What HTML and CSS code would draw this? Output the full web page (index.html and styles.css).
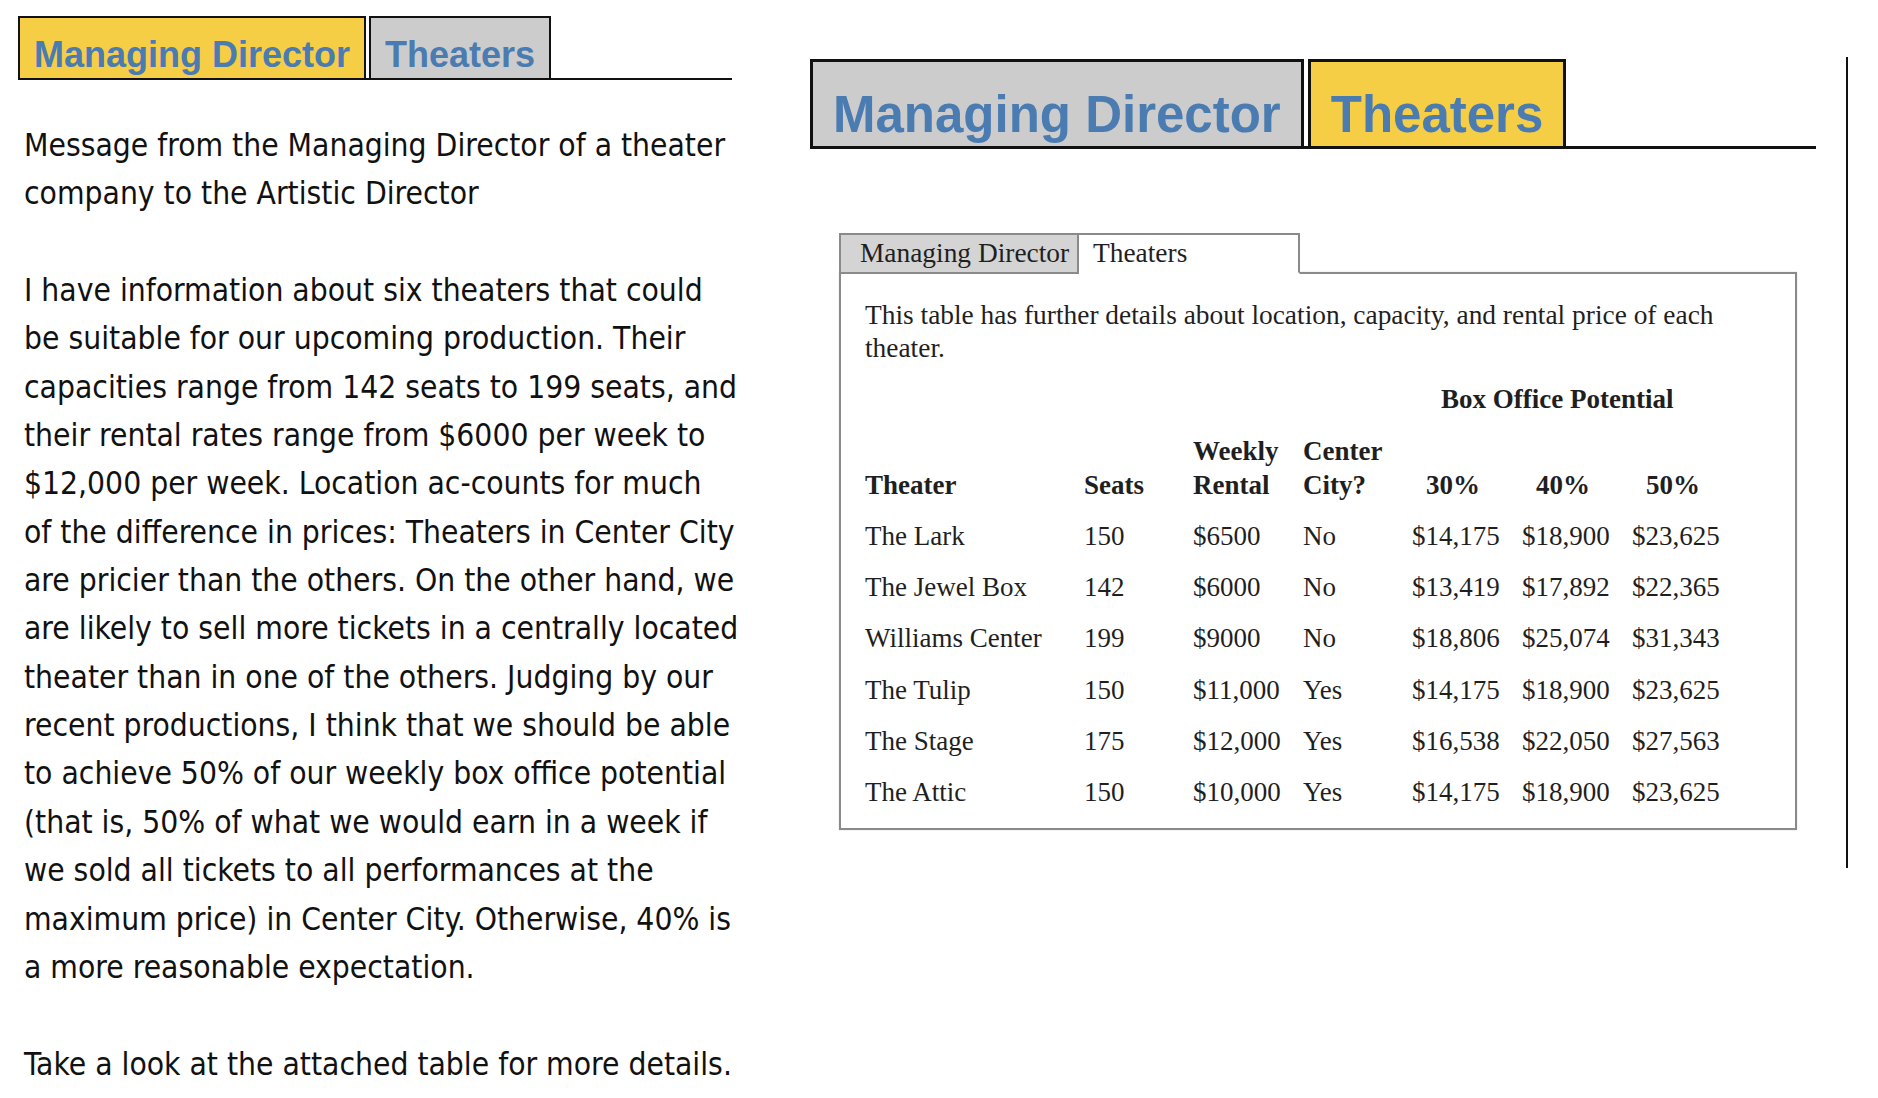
FILE: index.html
```html
<!DOCTYPE html>
<html lang="en">
<head>
<meta charset="utf-8">
<title>Managing Director – Theaters</title>
<link rel="stylesheet" href="styles.css">
</head>
<body>
<div class="page">
  <section class="memo">
    <nav class="tabs tabs-sm">
      <div class="tab tab-on">Managing Director</div>
      <div class="tab tab-off">Theaters</div>
    </nav>
    <div class="memo-body">
      <p>Message from the Managing Director of a theater<br>company to the Artistic Director</p>
      <p>I have information about six theaters that could<br>be suitable for our upcoming production. Their<br>capacities range from 142 seats to 199 seats, and<br>their rental rates range from $6000 per week to<br>$12,000 per week. Location ac-counts for much<br>of the difference in prices: Theaters in Center City<br>are pricier than the others. On the other hand, we<br>are likely to sell more tickets in a centrally located<br>theater than in one of the others. Judging by our<br>recent productions, I think that we should be able<br>to achieve 50% of our weekly box office potential<br>(that is, 50% of what we would earn in a week if<br>we sold all tickets to all performances at the<br>maximum price) in Center City. Otherwise, 40% is<br>a more reasonable expectation.</p>
      <p>Take a look at the attached table for more details.</p>
    </div>
  </section>

  <section class="doc">
    <nav class="tabs tabs-lg">
      <div class="tab tab-off">Managing Director</div>
      <div class="tab tab-on">Theaters</div>
    </nav>
    <div class="window">
      <div class="wtabs">
        <div class="wtab wtab-off">Managing Director</div>
        <div class="wtab wtab-on">Theaters</div>
      </div>
      <div class="wpanel">
        <p class="desc">This table has further details about location, capacity, and rental price of each theater.</p>
        <table class="theaters">
          <colgroup>
            <col class="c-name"><col class="c-num"><col class="c-num2"><col class="c-num">
            <col class="c-num2"><col class="c-num2"><col class="c-num2">
          </colgroup>
          <thead>
            <tr class="group">
              <th colspan="4"></th>
              <th colspan="3" class="bop">Box Office Potential</th>
            </tr>
            <tr class="head">
              <th>Theater</th>
              <th>Seats</th>
              <th>Weekly<br>Rental</th>
              <th>Center<br>City?</th>
              <th class="pct">30%</th>
              <th class="pct">40%</th>
              <th class="pct">50%</th>
            </tr>
          </thead>
          <tbody>
            <tr><td>The Lark</td><td>150</td><td>$6500</td><td>No</td><td>$14,175</td><td>$18,900</td><td>$23,625</td></tr>
            <tr><td>The Jewel Box</td><td>142</td><td>$6000</td><td>No</td><td>$13,419</td><td>$17,892</td><td>$22,365</td></tr>
            <tr><td>Williams Center</td><td>199</td><td>$9000</td><td>No</td><td>$18,806</td><td>$25,074</td><td>$31,343</td></tr>
            <tr><td>The Tulip</td><td>150</td><td>$11,000</td><td>Yes</td><td>$14,175</td><td>$18,900</td><td>$23,625</td></tr>
            <tr><td>The Stage</td><td>175</td><td>$12,000</td><td>Yes</td><td>$16,538</td><td>$22,050</td><td>$27,563</td></tr>
            <tr><td>The Attic</td><td>150</td><td>$10,000</td><td>Yes</td><td>$14,175</td><td>$18,900</td><td>$23,625</td></tr>
          </tbody>
        </table>
      </div>
    </div>
  </section>
</div>
</body>
</html>
```

FILE: styles.css
```css
html, body {
  margin: 0;
  padding: 0;
  background: #ffffff;
  overflow: hidden;
}

.page {
  display: flex;
  align-items: flex-start;
  gap: 78px;
  padding: 16px 0 0 18px;
}

/* ---------- tab bars ---------- */
.tabs {
  display: flex;
  align-items: flex-end;
  font-family: "Liberation Sans", Arial, sans-serif;
  font-weight: bold;
  color: #4a7bb1;
  white-space: nowrap;
}

.tab-on { background: #f6ce45; }
.tab-off { background: #cccccc; }

.tabs-sm {
  gap: 3px;
  border-bottom: 2px solid #111111;
}

.tabs-sm .tab {
  border: 2px solid #111111;
  border-bottom: 0;
  font-size: 36px;
  line-height: 40px;
  padding: 17px 14px 3px;
}

.tabs-lg {
  width: 1006px;
  gap: 4px;
  border-bottom: 3px solid #111111;
}

.tabs-lg .tab {
  border: 3px solid #111111;
  border-bottom: 0;
  font-size: 51px;
  line-height: 56px;
  padding: 25px 20px 3px;
}

/* ---------- left memo ---------- */
.memo {
  flex: none;
  width: 714px;
}

.memo-body {
  padding: 41px 0 0 6px;
  font-family: "DejaVu Sans Condensed", "Noto Sans", sans-serif;
  font-size: 31.5px;
  line-height: 48.35px;
  color: #111111;
}

.memo-body p {
  margin: 0 0 48.35px;
  white-space: nowrap;
}

/* ---------- right document ---------- */
.doc {
  flex: none;
  box-sizing: border-box;
  width: 1038px;
  height: 811px;
  margin-top: 41px;
  padding-top: 2px;
  border-right: 2px solid #111111;
}

.window {
  width: 958px;
  margin: 84px 0 0 29px;
  font-family: "Liberation Serif", "Times New Roman", serif;
  font-size: 27px;
  color: #1f1f1f;
}

.wtabs {
  display: flex;
  position: relative;
  z-index: 1;
  margin-bottom: -2px;
}

.wtab {
  height: 37px;
  line-height: 37px;
  border: 2px solid #8a8a8a;
  white-space: nowrap;
}

.wtab-off {
  width: 217px;
  padding-left: 19px;
  background: #d4d4d4;
  font-size: 27.4px;
}

.wtab-on {
  width: 205px;
  padding-left: 14px;
  background: #ffffff;
  border-left: 0;
  border-bottom-color: #ffffff;
  font-size: 27.4px;
}

.wpanel {
  box-sizing: border-box;
  width: 958px;
  border: 2px solid #8a8a8a;
  padding: 25px 25px 10px 24px;
  box-shadow: 0 0 1px rgba(0, 0, 0, 0.25);
}

.desc {
  margin: 0;
  font-size: 27.4px;
  line-height: 33px;
}

/* ---------- table ---------- */
.theaters {
  table-layout: fixed;
  width: 877px;
  border-collapse: collapse;
}

.c-name { width: 219px; }
.c-num { width: 109px; }
.c-num2 { width: 110px; }

.theaters th,
.theaters td {
  padding: 0;
  text-align: left;
  white-space: nowrap;
}

.theaters th {
  font-weight: bold;
  vertical-align: bottom;
}

.theaters .group th {
  padding-top: 18px;
  line-height: 33px;
}

.theaters .group .bop {
  padding-left: 29px;
}

.theaters .head th {
  padding: 18px 0 9px;
  line-height: 34px;
}

.theaters .head .pct {
  padding-left: 14px;
}

.theaters td {
  line-height: 51.2px;
  vertical-align: middle;
}
```
